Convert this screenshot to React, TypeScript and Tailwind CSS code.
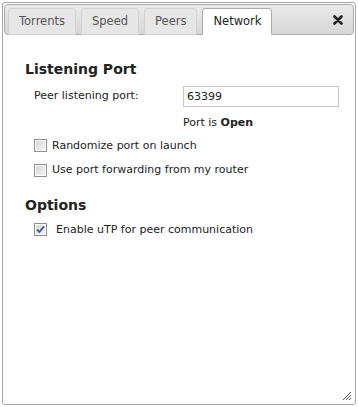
import React from 'react';

const font = { fontFamily: '"DejaVu Sans", Verdana, sans-serif' };

const tabs = ['Torrents', 'Speed', 'Peers', 'Network'];

const Checkbox: React.FC<{ checked?: boolean }> = ({ checked = false }) => (
  <span className="relative inline-flex h-[13px] w-[13px] shrink-0 items-center justify-center border border-[#8f8f8f] bg-white">
    <span className="absolute inset-[1px] bg-gradient-to-br from-[#d6d6d6] to-[#f4f4f4]" />
    {checked && (
      <svg viewBox="0 0 11 11" className="relative h-[11px] w-[11px]">
        <path d="M2 5.5 L4.3 8 L9 2.5" fill="none" stroke="#2a4fa6" strokeWidth="1.8" />
      </svg>
    )}
  </span>
);

const CheckRow: React.FC<{ label: string; checked?: boolean; gap?: string }> = ({ label, checked, gap = 'gap-[5px]' }) => (
  <label className={`flex items-center ${gap} text-[11px] text-[#222]`}>
    <Checkbox checked={checked} />
    <span>{label}</span>
  </label>
);

export default function App() {
  return (
    <div className="h-[407px] w-[358px] bg-white p-[2px]" style={font}>
      <div className="relative flex h-full flex-col rounded-[3px] border border-[#a6a6a6] bg-white p-[1px]">
        {/* tab bar */}
        <div className="flex h-[31px] items-end rounded-[4px] border border-[#aaaaaa] bg-gradient-to-b from-[#eaeaea] to-[#d6d6d6] pl-[3px] pr-[10px]">
          {tabs.map((t) => {
            const active = t === 'Network';
            return (
              <div
                key={t}
                className={`mr-[5px] -mb-px flex h-[27px] items-center rounded-t-[4px] border px-[10px] text-[11.5px] ${
                  active
                    ? 'border-[#aaaaaa] border-b-white bg-white text-[#222]'
                    : 'border-[#d3d3d3] bg-[#e6e6e6] text-[#555]'
                }`}
              >
                {t}
              </div>
            );
          })}
          <div className="ml-auto flex h-full items-center">
            <svg viewBox="0 0 10 10" className="h-[10px] w-[10px]">
              <path d="M1.5 1.5 L8.5 8.5 M8.5 1.5 L1.5 8.5" stroke="#222" strokeWidth="2.6" strokeLinecap="round" />
            </svg>
          </div>
        </div>

        {/* content */}
        <div className="flex-1 pl-[21px] pr-[8px] pt-[24px]">
          <h3 className="text-[14px] font-bold text-[#222]">Listening Port</h3>
          <div className="mt-[6px] pl-[9px]">
            <div className="flex items-center">
              <span className="w-[149px] shrink-0 text-[11px] text-[#222]">Peer listening port:</span>
              <input
                readOnly
                value="63399"
                className="h-[21px] w-[156px] shrink-0 border border-[#c8c8c8] px-[3px] text-[11px] text-[#222] outline-none"
                style={font}
              />
            </div>
            <div className="mt-[8px] pl-[149px] text-[11px] text-[#222]">
              Port is <b>Open</b>
            </div>
            <div className="mt-[6px] flex flex-col gap-[8px]">
              <CheckRow label="Randomize port on launch" />
              <CheckRow label="Use port forwarding from my router" />
            </div>
          </div>
          <h3 className="mt-[16px] text-[14px] font-bold text-[#222]">Options</h3>
          <div className="mt-[6px] pl-[9px]">
            <CheckRow label="Enable uTP for peer communication" checked gap="gap-[9px]" />
          </div>
        </div>

        {/* resize grip */}
        <svg viewBox="0 0 12 12" className="absolute bottom-[3px] right-[3px] h-[12px] w-[12px]">
          <path d="M11 3 L3 11 M11 6 L6 11 M11 9 L9 11" stroke="#555" strokeWidth="1" />
        </svg>
      </div>
    </div>
  );
}
